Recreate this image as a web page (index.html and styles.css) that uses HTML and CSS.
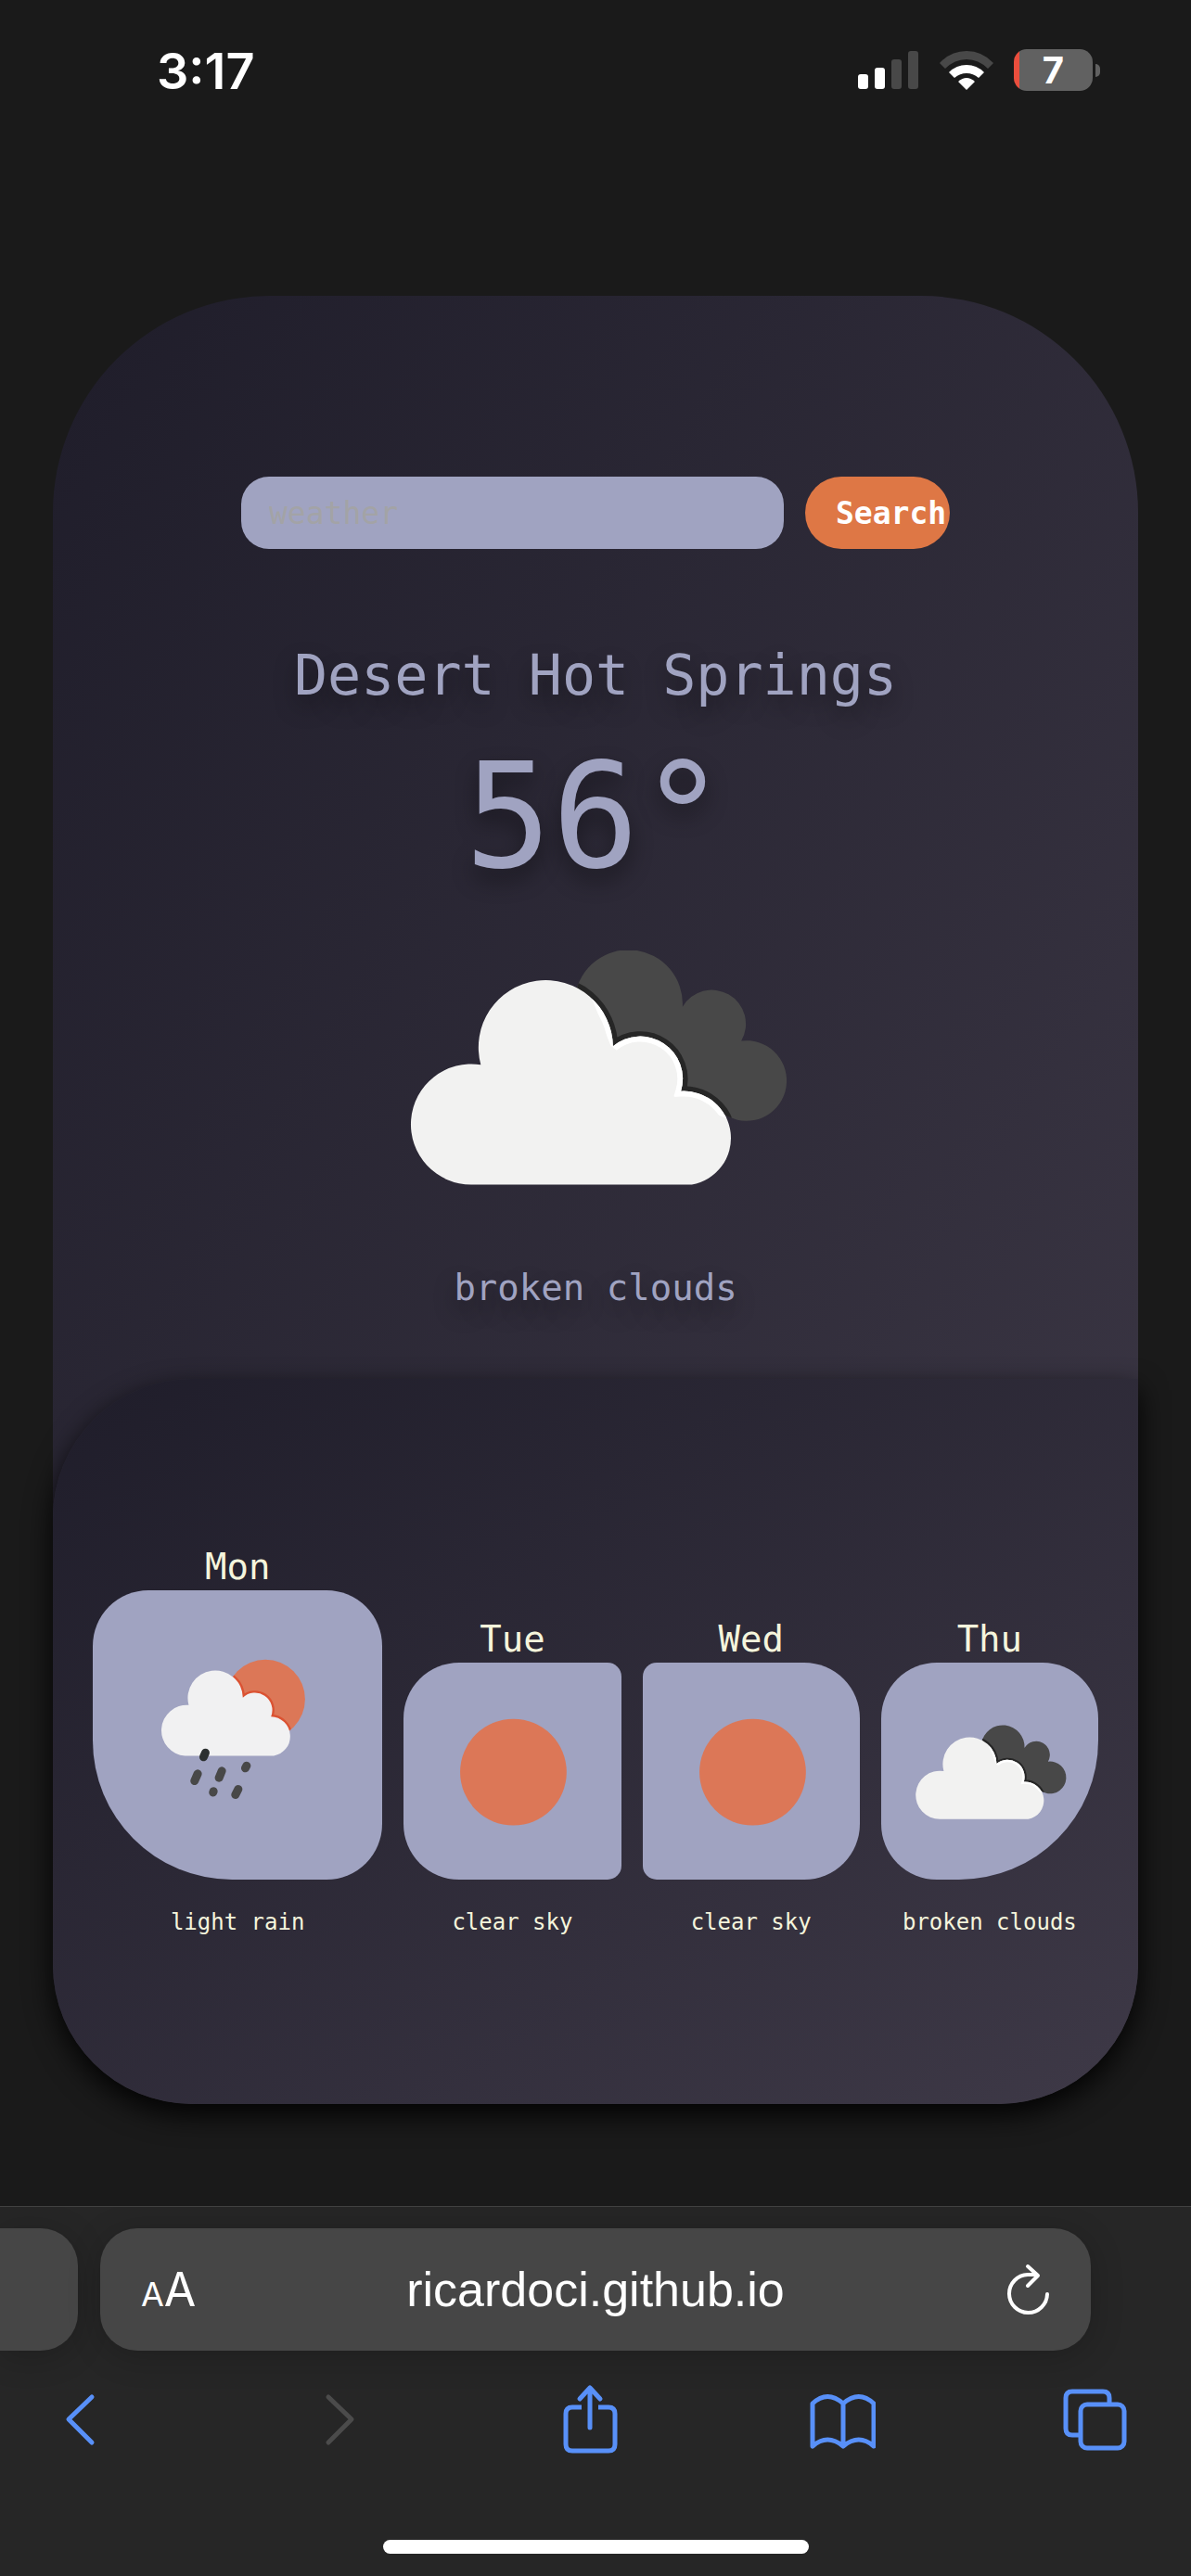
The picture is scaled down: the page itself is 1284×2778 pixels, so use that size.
FILE: index.html
```html
<!DOCTYPE html>
<html lang="en">
<head>
<meta charset="utf-8">
<meta name="viewport" content="width=device-width, initial-scale=1">
<title>Weather</title>
<link rel="stylesheet" href="styles.css">
</head>
<body>
<svg class="defs" aria-hidden="true">
  <defs>
    <path id="cloud-front" d="M220 545A78 78 0 1 1 232 390A87 87 0 1 1 403 366A55 55 0 0 1 491 424A61 61 0 0 1 505 545Z"/>
    <path id="cloud-back" d="M354 300A70 70 0 0 1 493 315A43 43 0 0 1 569 359A52 52 0 1 1 563 461L400 400Z"/>
    <clipPath id="clip-front"><use href="#cloud-front"/></clipPath>
    <clipPath id="clip-back"><use href="#cloud-back"/></clipPath>
    <clipPath id="clip-edge"><path d="M350 240H640V462H556L480 430L400 365Z"/></clipPath>
    <path id="rain-front" d="M358 580A82 82 0 1 1 370 416A89 89 0 1 1 545 392A56 56 0 0 1 636 453A64 64 0 0 1 645 580Z"/>
    <clipPath id="clip-sun"><circle cx="618" cy="397" r="128"/></clipPath>
  </defs>
  <symbol id="broken-clouds" viewBox="30 39 702 702">
    <use href="#cloud-back" fill="#484848"/>
    <g clip-path="url(#clip-back)"><use href="#cloud-front" fill="none" stroke="#262626" stroke-width="13"/></g>
    <use href="#cloud-front" fill="#f2f2f1"/>
    <g clip-path="url(#clip-edge)"><g clip-path="url(#clip-front)"><use href="#cloud-front" fill="none" stroke="#fff" stroke-width="14"/></g></g>
  </symbol>
</svg>

<header class="status">
  <time class="clock">3:17</time>
  <div class="indicators">
    <svg width="66" height="42" viewBox="0 0 66 42" role="img" aria-label="Signal">
      <rect x="0" y="25" width="11" height="16" rx="3" fill="#fff"/>
      <rect x="18" y="18" width="11" height="23" rx="3" fill="#fff"/>
      <rect x="36" y="9" width="11" height="32" rx="3" fill="#484848"/>
      <rect x="54" y="0" width="11" height="41" rx="3" fill="#484848"/>
    </svg>
    <svg width="58" height="42" viewBox="0 0 58 42" role="img" aria-label="Wi-Fi">
      <path d="M0 13Q12 0 29 0T58 13L52 19Q42 9 29 9T6 19Z" fill="#484848"/>
      <path d="M10 23Q18 15 29 15T48 23L42 29Q36 24 29 24T16 29Z" fill="#fff"/>
      <path d="M20 33Q29 25 38 33L29 42Z" fill="#fff"/>
    </svg>
    <div class="battery"><span class="level">7</span></div>
  </div>
</header>

<main class="app">
  <section class="now">
    <form class="search">
      <input class="field" type="text" placeholder="weather" aria-label="City">
      <button class="go" type="button">Search</button>
    </form>
    <h1 class="city">Desert Hot Springs</h1>
    <p class="temp">56°</p>
    <svg class="now-icon" viewBox="30 242 702 303" role="img" aria-label="Broken clouds"><use href="#broken-clouds" x="30" y="39" width="702" height="702"/></svg>
    <p class="sky">broken clouds</p>
  </section>
  <section class="forecast">
    <article class="day">
      <h2 class="name">Mon</h2>
      <div class="tile tile-mon">
        <svg class="tile-icon" viewBox="60 45 936 936" role="img" aria-label="Light rain">
          <circle cx="618" cy="397" r="128" fill="#dc7757"/>
          <g clip-path="url(#clip-sun)"><use href="#rain-front" fill="none" stroke="#db5232" stroke-width="14"/></g>
          <use href="#rain-front" fill="#f1f1f2"/>
          <g fill="none" stroke="#484848" stroke-width="27" stroke-linecap="round">
            <path d="M424 570L418 584" stroke="#2c3030"/>
            <path d="M399 638L389 661M477 629L468 651M557 612L553 620M450 695L449 698M530 688L521 706"/>
          </g>
        </svg>
      </div>
      <p class="note">light rain</p>
    </article>
    <article class="day">
      <h2 class="name">Tue</h2>
      <div class="tile tile-tue">
        <svg class="tile-icon" viewBox="0 0 702 702" role="img" aria-label="Clear sky"><circle cx="355" cy="354" r="172" fill="#dc7757"/></svg>
      </div>
      <p class="note">clear sky</p>
    </article>
    <article class="day">
      <h2 class="name">Wed</h2>
      <div class="tile tile-wed">
        <svg class="tile-icon" viewBox="0 0 702 702" role="img" aria-label="Clear sky"><circle cx="355" cy="354" r="172" fill="#dc7757"/></svg>
      </div>
      <p class="note">clear sky</p>
    </article>
    <article class="day">
      <h2 class="name">Thu</h2>
      <div class="tile tile-thu">
        <svg class="tile-icon" viewBox="30 39 702 702" role="img" aria-label="Broken clouds"><use href="#broken-clouds" x="30" y="39" width="702" height="702"/></svg>
      </div>
      <p class="note">broken clouds</p>
    </article>
  </section>
</main>

<footer class="browser">
  <div class="tabs">
    <div class="tab-prev"></div>
    <div class="address">
      <button class="reader" type="button" aria-label="Page settings"><span class="small-a">A</span>A</button>
      <span class="url">ricardoci.github.io</span>
      <button class="icon-btn reload" type="button" aria-label="Reload">
        <svg width="46" height="56" viewBox="0 0 46 56" fill="none" stroke="#fff" stroke-width="4" stroke-linecap="round" stroke-linejoin="round">
          <path d="M43 33A20.500 20.500 0 1 1 22 12H31"/><path d="M22 3L33 13L22 24"/>
        </svg>
      </button>
    </div>
  </div>
  <nav class="toolbar">
    <button class="icon-btn" type="button" aria-label="Back">
      <svg class="glyph" viewBox="0 0 72 76"><path d="M49 14L24 38L49 63"/></svg>
    </button>
    <button class="icon-btn" type="button" aria-label="Forward" disabled>
      <svg class="glyph glyph-off" viewBox="0 0 72 76"><path d="M30 14L55 38L30 63"/></svg>
    </button>
    <button class="icon-btn" type="button" aria-label="Share">
      <svg class="glyph" viewBox="0 0 72 76"><path d="M38 5V47M27 16L38 4L49 16"/><path stroke-linecap="butt" d="M29 25H19Q12 25 12 32V65Q12 72 19 72H58Q65 72 65 65V32Q65 25 58 25H47"/></svg>
    </button>
    <button class="icon-btn" type="button" aria-label="Bookmarks">
      <svg class="glyph" viewBox="0 0 72 76"><path d="M37 67Q20 53 4 67V21Q20 6 37 21Q54 6 70 21V67Q54 53 37 67V21"/></svg>
    </button>
    <button class="icon-btn" type="button" aria-label="Tabs">
      <svg class="glyph" viewBox="0 0 72 76"><rect x="19" y="22" width="47" height="47" rx="7"/><path stroke-linecap="butt" d="M19 55H10Q3 55 3 48V15Q3 8 10 8H43Q50 8 50 15V22"/></svg>
    </button>
  </nav>
  <div class="home-bar"></div>
</footer>
</body>
</html>
```
FILE: styles.css
```css
* { box-sizing: border-box; }
body {
  margin: 0;
  min-height: 100vh;
  display: flex;
  flex-direction: column;
  background: #1a1a1a;
  color: #a0a3c1;
  font-family: "DejaVu Sans Mono", monospace;
}
h1, h2, p { margin: 0; font-weight: 400; }
svg { display: block; }
button { border: 0; padding: 0; background: none; color: inherit; font: inherit; }
.defs { position: absolute; width: 0; height: 0; }

.status {
  display: flex;
  justify-content: space-between;
  align-items: center;
  height: 151px;
  padding: 0 96px 0 169px;
  color: #fff;
  font-family: Inter, "Liberation Sans", sans-serif;
}
.clock { padding-top: 2px; font-size: 54px; font-weight: 600; }
.indicators { display: flex; align-items: center; gap: 22px; }
.battery {
  position: relative;
  display: flex;
  align-items: center;
  justify-content: center;
  width: 85px;
  height: 45px;
  margin-right: 10px;
  border-radius: 14px;
  background: linear-gradient(90deg, #eb4e3d 6px, #616161 6px);
}
.battery::after {
  content: "";
  position: absolute;
  left: 88px;
  top: 16px;
  width: 5px;
  height: 14px;
  border-radius: 0 5px 5px 0;
  background: #616161;
}
.level { font-size: 40px; line-height: 45px; font-weight: 700; }

.app {
  margin: 168px 57px 0;
  border-radius: 234px 234px 150px 150px;
  background: linear-gradient(to bottom right, #1f1d2a, #3e3947);
}
.now {
  display: flex;
  flex-direction: column;
  align-items: center;
  padding-top: 195px;
  text-align: center;
}
.search { display: flex; gap: 23px; }
.field {
  width: 585px;
  height: 78px;
  padding: 0 30px;
  border: 0;
  border-radius: 30px;
  background: #a0a3c1;
  color: #1f1d2a;
  font: 33px "DejaVu Sans Mono", monospace;
}
.field::placeholder { color: #a3a3a6; opacity: 1; }
.go {
  width: 156px;
  height: 78px;
  padding-left: 33px;
  border-radius: 39px;
  background: #de7745;
  color: #fff;
  font-size: 33px;
  font-weight: 700;
  text-align: left;
}
.city, .temp, .sky { text-shadow: 0 12px 24px rgba(0, 0, 0, .4); }
.city { margin-top: 100px; font-size: 60px; line-height: 72px; }
.temp { margin-top: 27px; font-size: 156px; line-height: 180px; }
.now-icon { width: 50%; margin-top: 54px; }
.sky { margin-top: 88px; font-size: 39px; line-height: 46px; }

.forecast {
  display: grid;
  grid-template-columns: 4fr 3fr 3fr 3fr;
  align-items: end;
  gap: 23px;
  margin-top: 75px;
  padding: 178px 43px 180px;
  border-radius: 150px 0 150px 150px;
  background: linear-gradient(to bottom right, #1f1d2a, #3e3947);
  box-shadow: 0 12px 30px rgba(0, 0, 0, .9);
  color: #f5f5dc;
  text-align: center;
}
.name { font-size: 39px; line-height: 50px; }
.tile { aspect-ratio: 1; border-radius: 60px; background: #a0a3c1; overflow: hidden; }
.tile-mon { border-bottom-left-radius: 150px; }
.tile-tue { border-radius: 60px 15px 15px 60px; }
.tile-wed { border-radius: 15px 60px 60px 15px; }
.tile-thu { border-bottom-right-radius: 150px; }
.tile-icon { width: 100%; height: 100%; }
.note { margin-top: 30px; font-size: 24px; line-height: 32px; white-space: nowrap; }

.browser {
  margin-top: auto;
  padding-bottom: 24px;
  border-top: 1px solid #414141;
  background: #262626;
  overflow: hidden;
  font-family: Inter, "Liberation Sans", sans-serif;
}
.tabs { display: flex; gap: 24px; margin-top: 23px; padding-right: 108px; }
.tab-prev, .address { height: 132px; background: #464646; box-shadow: 0 6px 36px rgba(0, 0, 0, .2); }
.tab-prev { width: 84px; border-radius: 0 40px 40px 0; }
.address {
  flex: 1;
  display: grid;
  grid-template-columns: 1fr auto 1fr;
  align-items: center;
  padding: 0 44px;
  border-radius: 40px;
  color: #fff;
}
.reader { padding-top: 4px; font-size: 50px; line-height: 60px; text-align: left; }
.small-a { font-size: 36px; }
.url { font: 52px/60px "Liberation Sans", Arial, sans-serif; }
.icon-btn { display: flex; }
.reload { justify-self: end; }
.toolbar { display: flex; justify-content: space-between; margin-top: 36px; padding: 0 66px 0 50px; }
.glyph { width: 72px; height: 76px; fill: none; stroke: #5890f8; stroke-width: 5px; stroke-linecap: round; stroke-linejoin: round; }
.glyph-off { stroke: #4b4b4b; }
.home-bar { width: 459px; height: 15px; margin: 92px auto 0; border-radius: 8px; background: #fff; }
```
